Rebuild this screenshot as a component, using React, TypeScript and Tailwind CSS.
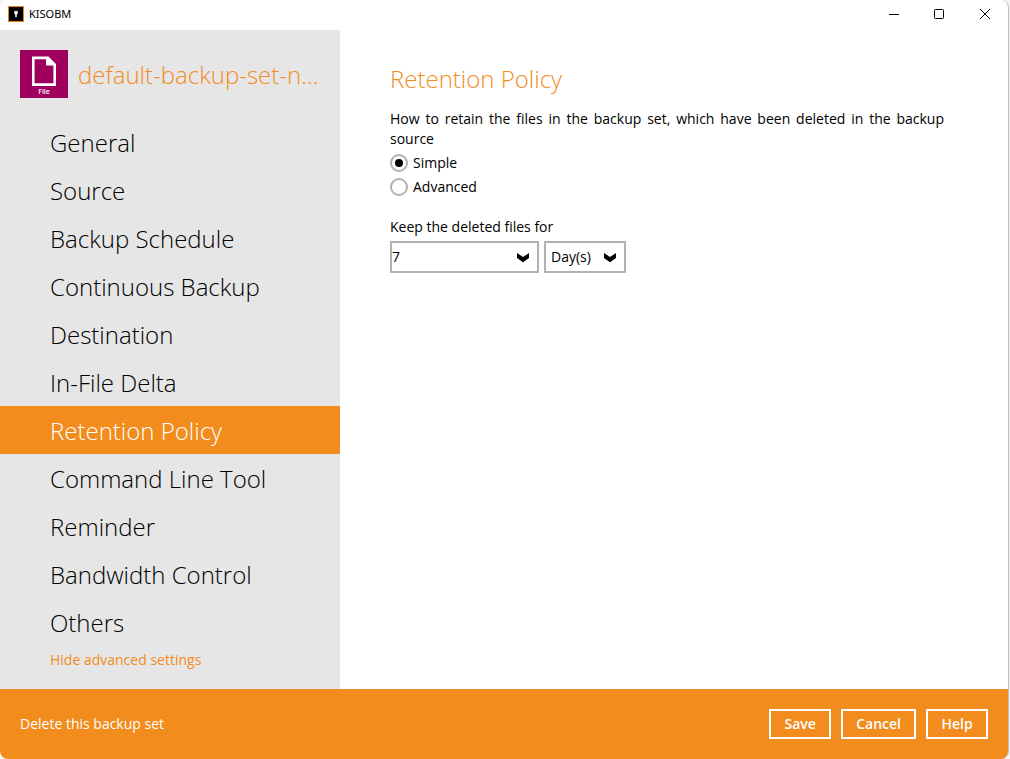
import React, { useState } from "react"
import clsx from "clsx"

const navItems = [
  "General",
  "Source",
  "Backup Schedule",
  "Continuous Backup",
  "Destination",
  "In-File Delta",
  "Retention Policy",
  "Command Line Tool",
  "Reminder",
  "Bandwidth Control",
  "Others",
]

const modes = ["Simple", "Advanced"]

function AppIcon() {
  return (
    <svg width="16" height="16" viewBox="0 0 16 16" aria-hidden="true">
      <rect width="16" height="16" fill="#f08418" />
      <rect x="1" y="1" width="14" height="14" fill="#000" />
      <circle cx="8" cy="6.6" r="1.9" fill="#fff" />
      <rect x="7.2" y="7" width="1.6" height="4" fill="#fff" />
    </svg>
  )
}

function FileIcon() {
  return (
    <div className="relative size-12 shrink-0 bg-[#9f005d]">
      <svg width="48" height="48" viewBox="0 0 48 48" aria-hidden="true">
        <path
          fill="#fff"
          fillRule="evenodd"
          d="M12 6.5H28.5L36 14V36H12ZM14.6 9.2V33.2H33.4V15.5H26V9.2Z"
        />
      </svg>
      <span className="absolute inset-x-0 bottom-0 text-center text-[7px] leading-3 font-semibold text-white">
        File
      </span>
    </div>
  )
}

function TitleBar() {
  return (
    <header className="flex h-[30px] shrink-0 items-center justify-between pb-0.5 pl-2">
      <div className="flex items-center gap-[5px]">
        <AppIcon />
        <span className="font-['Noto_Sans',sans-serif] text-[11px] leading-4 text-black">KISOBM</span>
      </div>
      <div className="flex h-full">
        <button type="button" aria-label="Minimize" className="flex w-11 items-center justify-center">
          <svg width="10" height="10" viewBox="0 0 10 10">
            <path d="M0 5.5H10" stroke="#000" />
          </svg>
        </button>
        <button type="button" aria-label="Maximize" className="flex w-[46px] items-center justify-center">
          <svg width="10" height="10" viewBox="0 0 10 10">
            <rect x="0.5" y="0.5" width="9" height="9" rx="0.8" fill="none" stroke="#000" />
          </svg>
        </button>
        <button type="button" aria-label="Close" className="flex w-[46px] items-center justify-center">
          <svg width="10" height="10" viewBox="0 0 10 10">
            <path d="M0 0L10 10M10 0L0 10" stroke="#000" />
          </svg>
        </button>
      </div>
    </header>
  )
}

interface SidebarProps {
  active: string
  onSelect: (item: string) => void
}

function Sidebar({ active, onSelect }: SidebarProps) {
  return (
    <aside className="w-[340px] shrink-0 bg-[#e6e6e6] pt-5">
      <div className="mb-5 flex items-center gap-2.5 px-5">
        <FileIcon />
        <span className="h-12 text-2xl leading-[50px] font-light whitespace-nowrap text-[#f28c1c]">
          default-backup-set-n...
        </span>
      </div>
      <nav>
        {navItems.map((item) => (
          <a
            key={item}
            href="#"
            onClick={() => onSelect(item)}
            className={clsx(
              "block h-12 pl-[50px] text-2xl leading-[50px] font-light",
              item === active ? "bg-[#f28c1c] text-white" : "text-black"
            )}
          >
            {item}
          </a>
        ))}
      </nav>
      <a href="#" className="mt-1 mb-[19px] ml-[50px] block w-fit text-sm text-[#f28c1c]">
        Hide advanced settings
      </a>
    </aside>
  )
}

interface SelectBoxProps {
  label: string
  options: string[]
  className: string
  selectClassName?: string
  id?: string
}

function SelectBox({ label, options, className, selectClassName, id }: SelectBoxProps) {
  return (
    <div className={clsx("relative", className)}>
      <select
        id={id}
        aria-label={label}
        className={clsx(
          "h-8 w-full appearance-none border-2 border-[#b2b2b2] bg-white text-sm text-black",
          selectClassName
        )}
      >
        {options.map((option) => (
          <option key={option}>{option}</option>
        ))}
      </select>
      <svg
        width="12"
        height="10"
        viewBox="0 0 12 10"
        aria-hidden="true"
        className="pointer-events-none absolute top-3 right-2.5"
      >
        <path d="M0 0L6 4L12 0V5L6 9.2L0 5Z" fill="#000" />
      </svg>
    </div>
  )
}

function RetentionPolicy() {
  const [mode, setMode] = useState("Simple")

  return (
    <main className="min-w-0 flex-1 pt-[31px] pr-16 pl-[50px]">
      <h1 className="text-2xl leading-9 font-light text-[#f28c1c]">Retention Policy</h1>
      <fieldset className="mt-3">
        <legend className="text-justify text-sm">
          How to retain the files in the backup set, which have been deleted in the backup source
        </legend>
        <div className="pt-0.5">
          {modes.map((m) => (
            <label key={m} className="flex h-6 items-center gap-[5px] text-sm">
              <input
                type="radio"
                name="mode"
                checked={mode === m}
                onChange={() => setMode(m)}
                className="grid size-[18px] appearance-none place-content-center rounded-full border-2 border-[#b2b2b2] bg-white before:size-2 before:rounded-full checked:before:bg-black"
              />
              {m}
            </label>
          ))}
        </div>
      </fieldset>
      <label htmlFor="keep" className="mt-[18px] block text-sm">
        Keep the deleted files for
      </label>
      <div className="mt-1 flex gap-[5px]">
        <SelectBox
          id="keep"
          label="Keep the deleted files for"
          options={["7", "14", "30", "60", "90"]}
          className="w-[149px]"
        />
        <SelectBox label="Unit" options={["Day(s)", "Job(s)"]} className="w-[82px]" selectClassName="pl-[5px]" />
      </div>
    </main>
  )
}

function Footer() {
  return (
    <footer className="flex h-[70px] shrink-0 items-center justify-between bg-[#f28c1c] px-5 text-sm text-white">
      <a href="#">Delete this backup set</a>
      <div className="flex gap-2.5">
        {["Save", "Cancel", "Help"].map((action) => (
          <button
            key={action}
            type="button"
            className="h-[30px] min-w-[62px] border-2 border-white px-[13px] font-semibold"
          >
            {action}
          </button>
        ))}
      </div>
    </footer>
  )
}

export default function App() {
  const [active, setActive] = useState("Retention Policy")

  return (
    <div className="min-h-screen bg-[#f3f3f3] pr-px font-['Open_Sans',sans-serif] text-black">
      <div className="flex min-h-screen flex-col overflow-hidden rounded-lg border-r border-[#bdbdbd] bg-white">
        <TitleBar />
        <div className="flex flex-1">
          <Sidebar active={active} onSelect={setActive} />
          <RetentionPolicy />
        </div>
        <Footer />
      </div>
    </div>
  )
}
